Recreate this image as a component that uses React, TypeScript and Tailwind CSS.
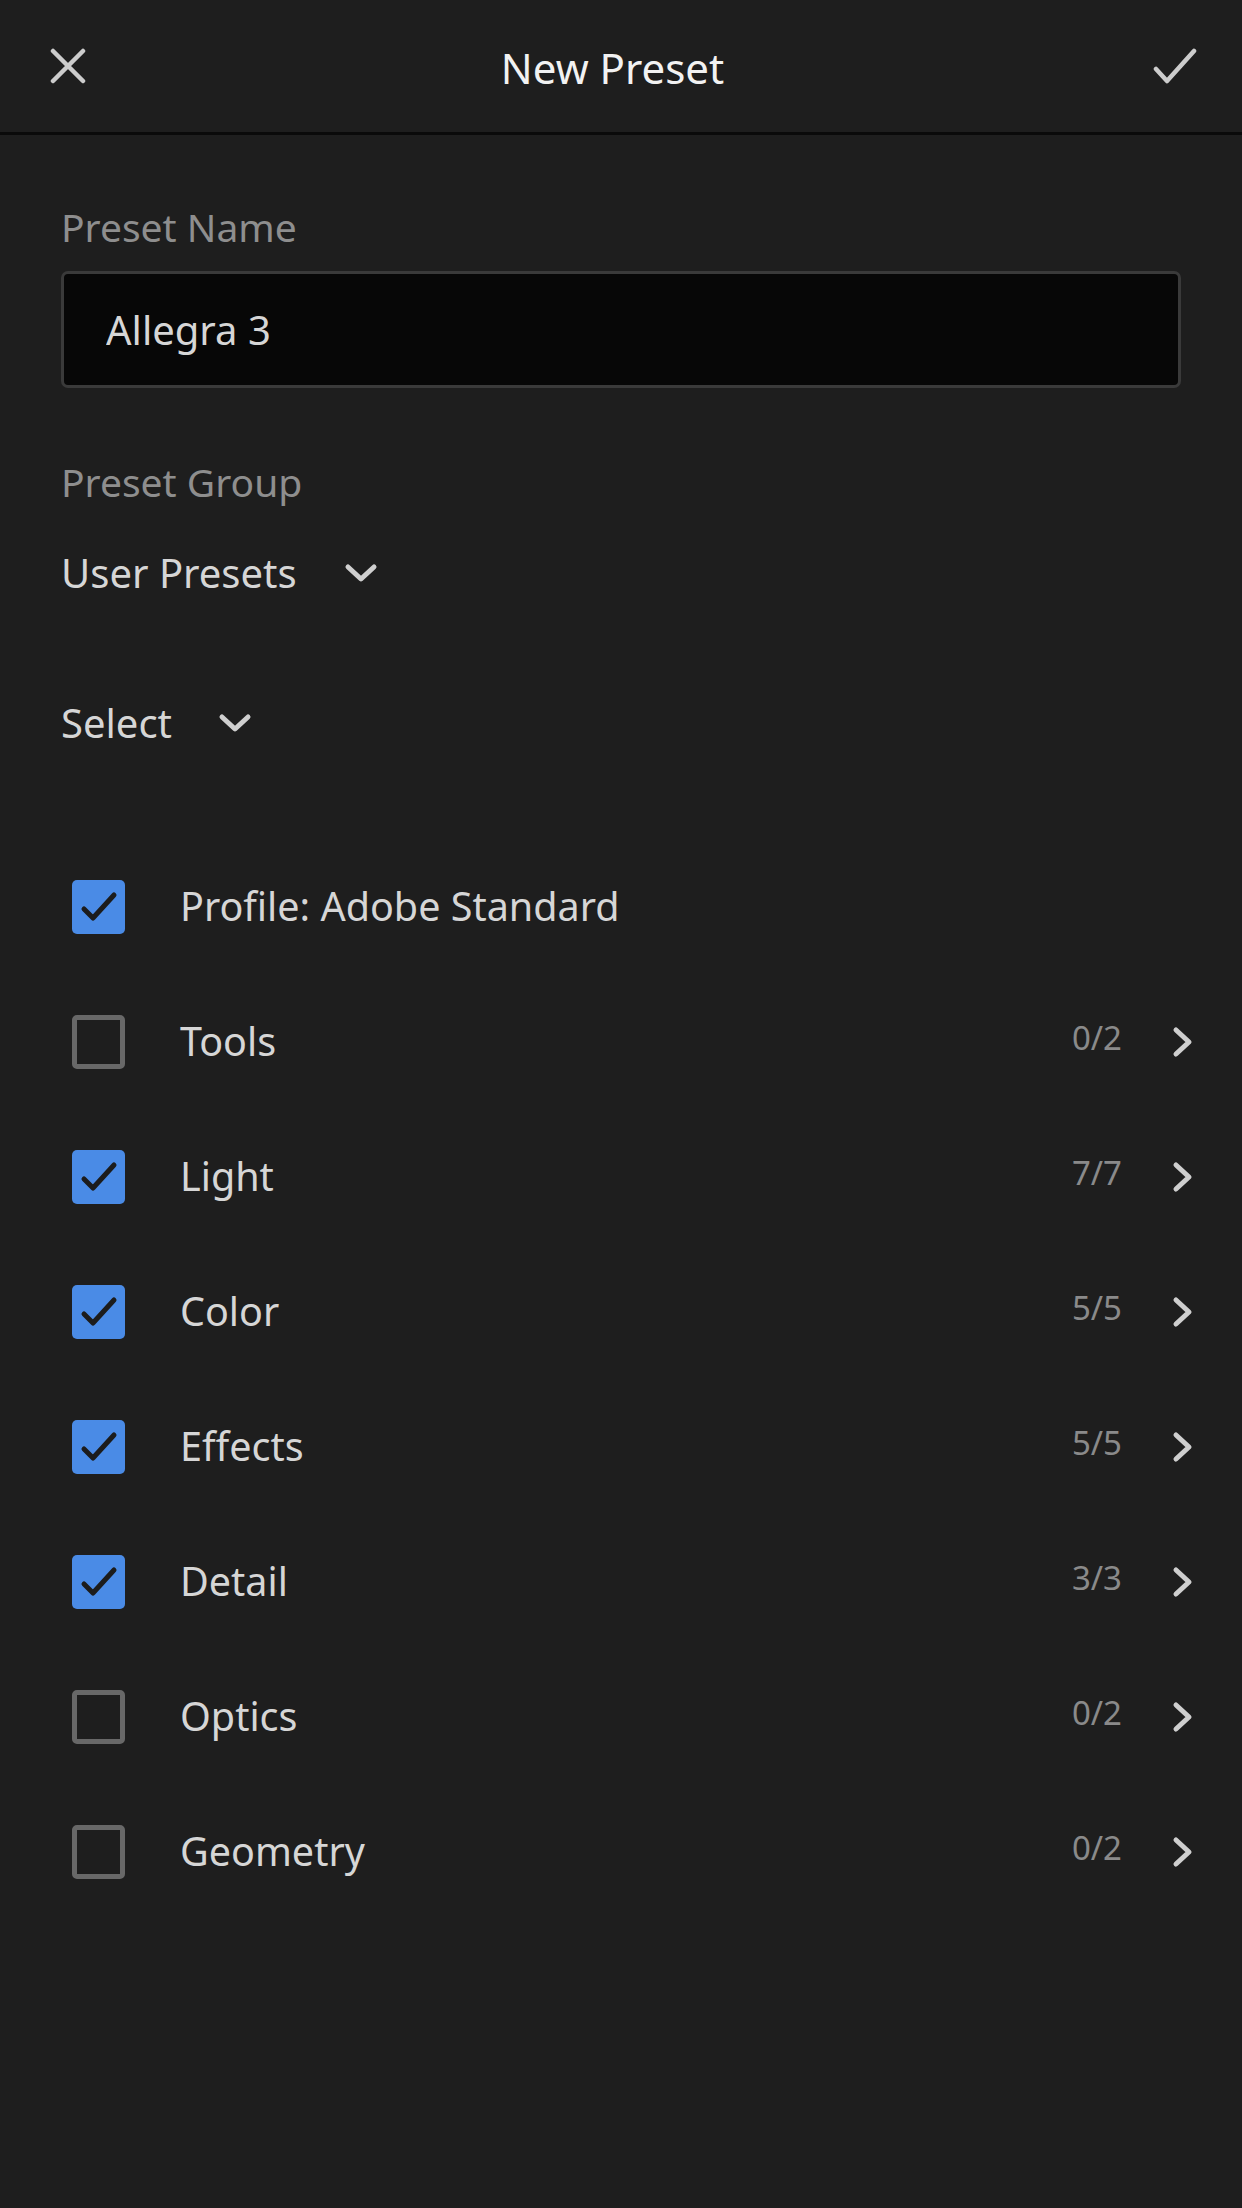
import { useState } from "react";

type Row = {
  label: string;
  checked: boolean;
  count?: string;
};

const initialRows: Row[] = [
  { label: "Profile: Adobe Standard", checked: true },
  { label: "Tools", checked: false, count: "0/2" },
  { label: "Light", checked: true, count: "7/7" },
  { label: "Color", checked: true, count: "5/5" },
  { label: "Effects", checked: true, count: "5/5" },
  { label: "Detail", checked: true, count: "3/3" },
  { label: "Optics", checked: false, count: "0/2" },
  { label: "Geometry", checked: false, count: "0/2" },
];

function ChevronDown() {
  return (
    <svg width="34" height="20" viewBox="0 0 34 20" fill="none">
      <path
        d="M4 4 L17 16 L30 4"
        stroke="#cfcfcf"
        strokeWidth="5"
        strokeLinecap="round"
        strokeLinejoin="round"
      />
    </svg>
  );
}

function ChevronRight() {
  return (
    <svg width="22" height="32" viewBox="0 0 22 32" fill="none">
      <path
        d="M4 4 L17 16 L4 28"
        stroke="#cfcfcf"
        strokeWidth="5"
        strokeLinecap="round"
        strokeLinejoin="round"
      />
    </svg>
  );
}

function Checkbox({ checked }: { checked: boolean }) {
  if (checked) {
    return (
      <div className="flex h-[54px] w-[53px] items-center justify-center rounded-[5px] bg-[#4a8be6]">
        <svg width="53" height="54" viewBox="0 0 53 54" fill="none">
          <path
            d="M12 29 L21 38 L42 15"
            stroke="#1c1c1c"
            strokeWidth="5"
            strokeLinecap="round"
            strokeLinejoin="round"
          />
        </svg>
      </div>
    );
  }
  return (
    <div className="h-[54px] w-[53px] rounded-[5px] border-[5px] border-[#686868]" />
  );
}

export default function App() {
  const [rows, setRows] = useState(initialRows);
  const [name, setName] = useState("Allegra 3");

  function toggle(index: number) {
    setRows((prev) =>
      prev.map((row, i) => (i === index ? { ...row, checked: !row.checked } : row)),
    );
  }

  return (
    <div
      className="min-h-[2208px] w-full bg-[#1e1e1e] text-[#d6d6d6]"
      style={{ fontFamily: '"Noto Sans", "Open Sans", sans-serif' }}
    >
      <header className="flex h-[135px] items-center justify-between border-b-[3px] border-[#0a0a0a] pl-[50px] pr-[45px]">
        <button className="flex h-[36px] w-[36px] items-center justify-center">
          <svg width="36" height="36" viewBox="0 0 36 36" fill="none">
            <path
              d="M3 3 L33 33 M33 3 L3 33"
              stroke="#cccccc"
              strokeWidth="4.5"
              strokeLinecap="round"
            />
          </svg>
        </button>
        <h1 className="mt-[3px] pr-[14px] text-[42px] leading-none text-[#f2f2f2]">New Preset</h1>
        <button className="flex h-[36px] w-[44px] items-center justify-center">
          <svg width="44" height="36" viewBox="0 0 44 36" fill="none">
            <path
              d="M3 21 L14 33 L41 3"
              stroke="#cccccc"
              strokeWidth="4.5"
              strokeLinecap="round"
              strokeLinejoin="round"
            />
          </svg>
        </button>
      </header>

      <div className="px-[61px]">
        <div className="mt-[62px] flex h-[60px] items-center text-[39px] text-[#8e8e8e]">
          Preset Name
        </div>
        <input
          className="mt-[14px] h-[117px] w-full rounded-[7px] border-[3px] border-[#3a3a3a] bg-[#070707] px-[42px] text-[40px] text-[#d6d6d6] outline-none"
          value={name}
          onChange={({ target }) => setName(target.value)}
        />

        <div className="mt-[64px] flex h-[60px] items-center text-[39px] text-[#8e8e8e]">
          Preset Group
        </div>
        <button className="mt-[31px] flex h-[60px] items-center gap-[47px] text-[40px] text-[#d6d6d6]">
          <span>User Presets</span>
          <ChevronDown />
        </button>

        <button className="mt-[90px] flex h-[60px] items-center gap-[46px] text-[40px] text-[#d6d6d6]">
          <span>Select</span>
          <ChevronDown />
        </button>
      </div>

      <ul className="mt-[86px] pl-[72px] pr-[48px]">
        {rows.map((row, i) => (
          <li key={row.label} className="flex h-[135px] items-center">
            <button onClick={() => toggle(i)}>
              <Checkbox checked={row.checked} />
            </button>
            <span className="ml-[55px] flex-1 text-[39.5px] text-[#d6d6d6]">{row.label}</span>
            {row.count ? (
              <>
                <span className="mb-[8px] text-[33px] text-[#8a8a8a]">{row.count}</span>
                <span className="ml-[50px] flex items-center">
                  <ChevronRight />
                </span>
              </>
            ) : null}
          </li>
        ))}
      </ul>
    </div>
  );
}
